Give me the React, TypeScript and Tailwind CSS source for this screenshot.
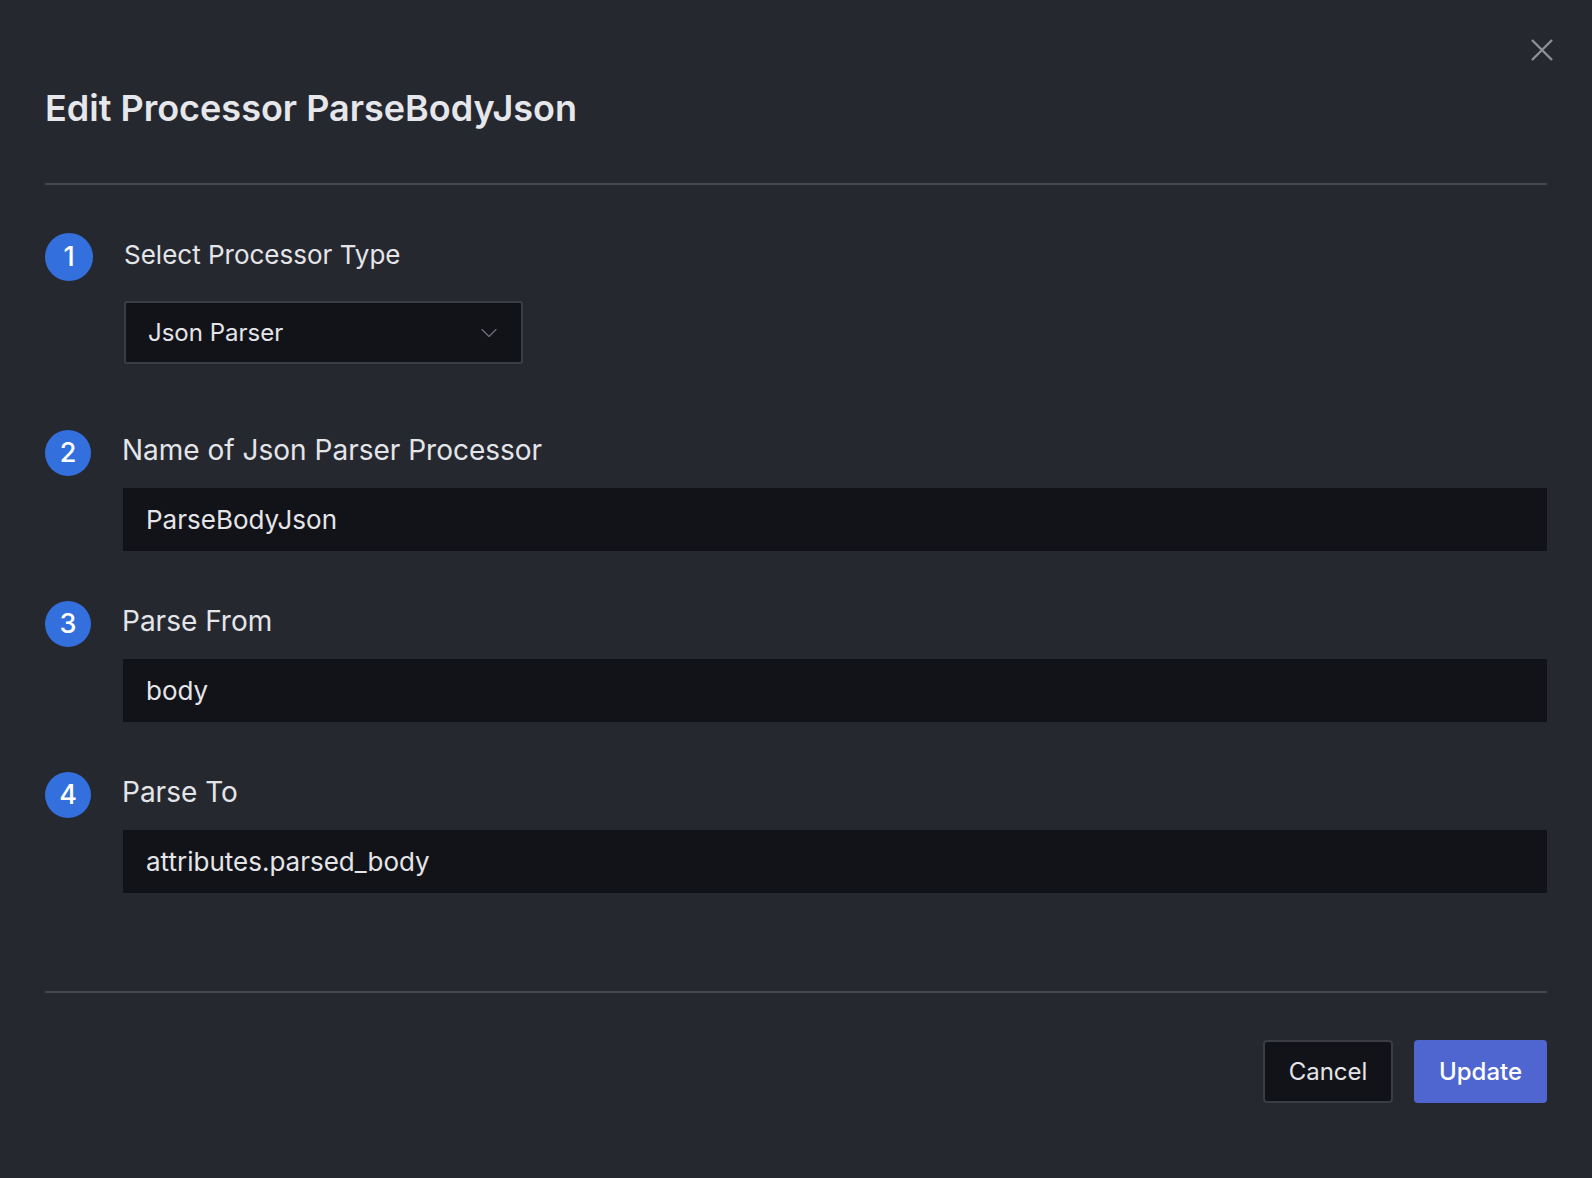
import { ChevronDown } from "lucide-react";

interface Step {
  n: number;
  label: string;
  value: string;
}

const steps: Step[] = [
  { n: 2, label: "Name of Json Parser Processor", value: "ParseBodyJson" },
  { n: 3, label: "Parse From", value: "body" },
  { n: 4, label: "Parse To", value: "attributes.parsed_body" },
];

function StepBadge({ n, big }: { n: number; big?: boolean }) {
  return (
    <div
      className={
        big
          ? "flex h-[48px] w-[48px] shrink-0 items-center justify-center rounded-full bg-[#3370dd] text-[27px] font-medium text-white"
          : "flex h-[46px] w-[46px] shrink-0 items-center justify-center rounded-full bg-[#3370dd] text-[27px] font-medium text-white"
      }
    >
      {n}
    </div>
  );
}

export default function App() {
  return (
    <div
      className="relative min-h-[1178px] w-full bg-[#262830] text-[#e4e5e9]"
      style={{ fontFamily: "Inter, 'Noto Sans', sans-serif" }}
    >
      <button className="absolute right-[39px] top-[39px] text-[#8e9097]">
        <svg width="22" height="22" viewBox="0 0 22 22" fill="none" stroke="currentColor" strokeWidth="2.4">
          <path d="M1 1L21 21M21 1L1 21" />
        </svg>
      </button>

      <div className="px-[45px] pt-[86px]">
        <h1 className="text-[36px] font-semibold leading-[44px] text-[#e6e7eb]">
          Edit Processor ParseBodyJson
        </h1>
        <div className="mt-[53px] h-[2px] bg-[#45474f]" />

        <div className="pt-[48px]">
          {/* step 1 */}
          <div className="flex items-center gap-[31px]">
            <StepBadge n={1} big />
            <span className="-mt-[4px] text-[26px] leading-[32px]">Select Processor Type</span>
          </div>
          <div className="ml-[79px] mt-[20px] flex h-[63px] w-[399px] items-center justify-between rounded-[3px] border-2 border-[#3b3d45] bg-[#121318] pl-[22px] pr-[18px]">
            <span className="text-[24px]">Json Parser</span>
            <ChevronDown size={28} strokeWidth={1} className="text-[#70727b]" />
          </div>

          {steps.map((s, i) => (
            <div key={s.n} className={i === 0 ? "mt-[66px]" : "mt-[50px]"}>
              <div className="flex items-center gap-[31px]">
                <StepBadge n={s.n} />
                <span className="-mt-[6px] text-[28px] leading-[36px]">{s.label}</span>
              </div>
              <div className="ml-[78px] mt-[12px] flex h-[63px] items-center bg-[#121318] pl-[23px] text-[26px]">
                {s.value}
              </div>
            </div>
          ))}
        </div>

        <div className="mt-[98px] h-[2px] bg-[#45474f]" />

        <div className="mt-[47px] flex justify-end gap-[21px]">
          <button className="h-[63px] w-[130px] rounded-[4px] border-2 border-[#3b3d45] bg-[#121318] text-[24px] text-[#e4e5e9]">
            Cancel
          </button>
          <button className="h-[63px] w-[133px] rounded-[4px] bg-[#4f66d1] text-[24px] font-medium text-white">
            Update
          </button>
        </div>
      </div>
    </div>
  );
}
